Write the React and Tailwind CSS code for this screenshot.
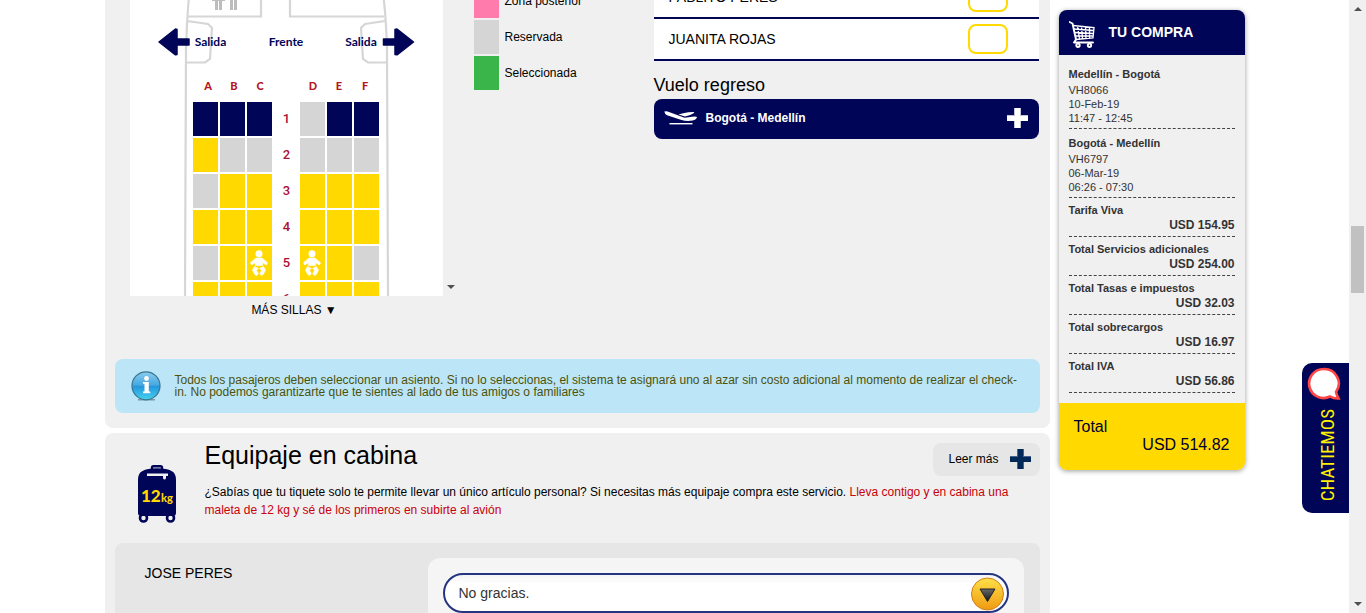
import React from "react";

const SEAT_COLORS = {
  n: "bg-[#000557]",
  y: "bg-[#ffd900]",
  g: "bg-[#d5d5d5]",
  b: "bg-[#ffd900]",
};

const SEAT_ROWS = [
  { row: 1, seats: "nnngnn" },
  { row: 2, seats: "yggggg" },
  { row: 3, seats: "gyyyyy" },
  { row: 4, seats: "yyyyyy" },
  { row: 5, seats: "gybbyg" },
  { row: 6, seats: "yyyyyy" },
];

const LEGEND = [
  { label: "Zona posterior", color: "bg-[#ff7bac]" },
  { label: "Reservada", color: "bg-[#d5d5d5]" },
  { label: "Seleccionada", color: "bg-[#39b54a]" },
];

const FLIGHTS = [
  { route: "Medellín - Bogotá", code: "VH8066", date: "10-Feb-19", time: "11:47 - 12:45" },
  { route: "Bogotá - Medellín", code: "VH6797", date: "06-Mar-19", time: "06:26 - 07:30" },
];

const FEES = [
  { label: "Tarifa Viva", amount: "USD 154.95" },
  { label: "Total Servicios adicionales", amount: "USD 254.00" },
  { label: "Total Tasas e impuestos", amount: "USD 32.03" },
  { label: "Total sobrecargos", amount: "USD 16.97" },
  { label: "Total IVA", amount: "USD 56.86" },
];

function BabyIcon() {
  return (
    <svg viewBox="0 0 18 26" className="h-[26px] w-[18px]" aria-hidden="true">
      <circle cx="9" cy="3.7" r="3.500" fill="#fff" />
      <path d="M6 8 H12 L17.600 12.800 L16.400 15 L12.600 12.800 V15.500 H5.400 V12.800 L1.600 15 L0.400 12.800 Z" fill="#fff" stroke="#fff" strokeWidth="0.600" strokeLinejoin="round" />
      <path d="M4.600 16.500 L8.400 18.500 L6.400 20.300 L8.300 23.500 L6.800 25.500 L4.800 24.500 L2.400 20 Z" fill="#fff" stroke="#fff" strokeWidth="0.600" strokeLinejoin="round" />
      <path d="M13.400 16.500 L9.600 18.500 L11.600 20.300 L9.700 23.500 L11.200 25.500 L13.200 24.500 L15.600 20 Z" fill="#fff" stroke="#fff" strokeWidth="0.600" strokeLinejoin="round" />
    </svg>
  );
}

function PlaneOutline() {
  const letters = [["A", 208], ["B", 234], ["C", 260], ["D", 313], ["E", 339], ["F", 365]];
  return (
    <svg viewBox="130 -23 313 319" className="absolute inset-0 h-full w-full" aria-hidden="true">
      <g fill="none" stroke="#d6d6d6" strokeWidth="2.2">
        <path d="M191 -23 Q187 10 186 50 L185 296" />
        <path d="M381 -23 Q386 10 387 50 L388 296" />
        <path d="M188 16.5 H261 V-23 M384 16.5 H290 V-23" />
        <path d="M187 21 L208 24 L212 28 L210 59 L205 62.5 H186" />
        <path d="M385 21 L365 24 L361 28 L363 59 L368 62.5 H387" />
      </g>
      <g fill="#bdbdbd">
        <path d="M212 -4 H225 V1 H222 V10 H219 V1 H218 V10 H215 V1 H212 Z" />
        <path d="M230 -4 H237 V10 H234 V0 H233 V10 H230 Z" />
      </g>
      <g fill="#000557" stroke="#000557" strokeWidth="1.5" strokeLinejoin="round">
        <path d="M159 42 L175.500 29 L177 29.500 V39 H189 V45 H177 V54.500 L175.500 54.800 Z" />
        <path d="M413.500 42 L397 29 L395 29.500 V39 H383.500 V45 H395 V54.500 L397 54.800 Z" />
      </g>
      <g className="font-['Lato',sans-serif] text-[12px] font-bold" fill="#000557" textAnchor="middle">
        <text x="210.500" y="46">Salida</text>
        <text x="286" y="46">Frente</text>
        <text x="361" y="46">Salida</text>
      </g>
      <g className="font-['Lato',sans-serif] text-[11px] font-black" fill="#b5161f" textAnchor="middle">
        {letters.map(([l, x]) => (
          <text key={l} x={x} y="90">{l}</text>
        ))}
      </g>
    </svg>
  );
}

function Seat({ kind, name }) {
  return (
    <button type="button" aria-label={name} className={"flex h-[34px] items-center justify-center " + SEAT_COLORS[kind]}>
      {kind === "b" && <BabyIcon />}
    </button>
  );
}

function SeatMap() {
  return (
    <div className="w-[313px] shrink-0">
      <div className="relative h-[319px] overflow-hidden bg-white pt-[125px]">
        <PlaneOutline />
        <div className="relative ml-[63px] grid w-fit grid-cols-[25px_25px_25px_24px_25px_25px_25px] gap-[2px]">
          {SEAT_ROWS.map(({ row, seats }) => (
            <React.Fragment key={row}>
              {[0, 1, 2].map((i) => (
                <Seat key={i} kind={seats[i]} name={row + "ABCDEF"[i]} />
              ))}
              <span className="pl-[2px] text-center text-[13px] font-medium leading-[34px] text-[#ab1036] font-['Roboto',sans-serif]">{row}</span>
              {[3, 4, 5].map((i) => (
                <Seat key={i} kind={seats[i]} name={row + "ABCDEF"[i]} />
              ))}
            </React.Fragment>
          ))}
        </div>
      </div>
      <button type="button" className="block w-full pl-4 text-center text-[12px] leading-7">MÁS SILLAS ▼</button>
    </div>
  );
}

function Plus({ color, shade }) {
  return (
    <svg viewBox="0 0 21 20" className="h-5 w-[21px] shrink-0" aria-hidden="true">
      <path d="M7 0 H14 V7 H21 V13 H14 V20 H7 V13 H0 V7 H7 Z" fill={shade} />
      <path d="M8 0 H13 V8 H21 V13 H13 V20 H8 V13 H0 V8 H8 Z" fill={color} />
    </svg>
  );
}

function TakeoffIcon() {
  return (
    <svg viewBox="0 0 34 14" className="h-[14px] w-[34px] shrink-0" aria-hidden="true">
      <g fill="#fff">
        <path d="M0.300 0.600 Q2.500 -0.200 5 0.900 L14.500 4.600 L20.500 6.700 Q25 6.500 28 5.800 Q31.500 4.900 33 6 Q32.500 8.500 28.500 9.600 Q23 10.800 17.500 9 L3 4.300 Q0.800 3.400 0.300 0.600 Z" />
        <path d="M14.500 3.600 Q19 1.400 29 0.900 Q31 0.900 30 2 Q27 4.200 21 5.600 Z" />
        <rect x="5.500" y="12" width="23" height="1.400" />
      </g>
    </svg>
  );
}

function Passengers() {
  return (
    <div className="ml-auto w-[385px]">
      {["PABLITO PERES", "JUANITA ROJAS"].map((name) => (
        <label key={name} className="flex h-[42px] items-center justify-between border-b-2 border-[#000557] bg-white pl-[15px] pr-[31px] text-[14px]">
          {name}
          <input type="text" readOnly className="h-[30px] w-10 rounded-lg border-2 border-[#ffd900] bg-white outline-none" />
        </label>
      ))}
      <h3 className="pb-[2px] pt-3 text-[18px] leading-6">Vuelo regreso</h3>
      <button type="button" className="flex h-10 w-full items-center rounded-lg bg-[#000557] pb-[2px] pl-[10px] pr-[11px] text-[12px] font-bold text-white">
        <TakeoffIcon />
        <span className="ml-2 flex-1 text-left">Bogotá - Medellín</span>
        <Plus color="#fff" shade="#c4c5d8" />
      </button>
    </div>
  );
}

function InfoIcon() {
  return (
    <svg viewBox="0 0 30 30" className="h-[30px] w-[30px] shrink-0" aria-hidden="true">
      <defs>
        <linearGradient id="infoFill" x1="0" y1="0" x2="0" y2="1">
          <stop offset="0" stopColor="#8ccdee" />
          <stop offset="0.480" stopColor="#45a7e0" />
          <stop offset="0.520" stopColor="#2496dc" />
          <stop offset="1" stopColor="#45d3ee" />
        </linearGradient>
      </defs>
      <rect x="7" y="28" width="17" height="1.500" fill="#7d99a6" />
      <circle cx="15" cy="14.800" r="14" fill="url(#infoFill)" stroke="#38758f" strokeWidth="1.200" />
      <circle cx="15.500" cy="7.500" r="2.400" fill="#fff" />
      <path d="M12 11 H17.800 V20.500 H19.300 V22.200 H12 V20.500 H13.500 V12.700 H12 Z" fill="#fff" />
    </svg>
  );
}

function SuitcaseIcon() {
  return (
    <svg viewBox="0 0 38 58" className="h-[58px] w-[38px] shrink-0" aria-label="12kg">
      <path d="M14 4.500 V2.500 Q14 1.200 15.500 1.200 H22.500 Q24 1.200 24 2.500 V4.500" fill="none" stroke="#000557" strokeWidth="2.400" />
      <circle cx="5.500" cy="53" r="3.500" fill="#f0f0f0" stroke="#000557" strokeWidth="2.600" />
      <circle cx="32.500" cy="53" r="3.500" fill="#f0f0f0" stroke="#000557" strokeWidth="2.600" />
      <path d="M0 15 Q0 8 4.500 6 Q9 3.200 19 3.200 Q29 3.200 33.500 6 Q38 8 38 15 V48 Q38 51 35 51 H3 Q0 51 0 48 Z" fill="#000557" />
      <path d="M9 8.500 H30 V11 H28 V13 Q27.800 14.500 26.300 14.500 Q25 14.300 25 12.500 V11 H9 Z" fill="#f0f0f0" />
      <text x="3" y="37" fill="#ffd900" className="font-['Lato',sans-serif] text-[17px] font-black">12</text>
      <text x="23" y="37" fill="#ffd900" className="font-['Lato',sans-serif] text-[11px] font-black">kg</text>
    </svg>
  );
}

function CartIcon() {
  return (
    <svg viewBox="0 0 26 27" className="h-[27px] w-[26px] shrink-0" fill="none" stroke="#fff" aria-hidden="true">
      <path d="M0.500 1 L3.500 2.500 L7 18.500 L5 21.500 H24" strokeWidth="1.900" strokeLinejoin="round" strokeLinecap="round" />
      <path d="M4 4.500 L25 6.500 L24 17 L7 18.500 M4.500 8 L24.500 9.500 M5.500 11.500 L24 12.500 M6 15 L24 15 M8.500 5 L10.500 18 M12.500 5.500 L13.500 18 M16.500 6 L17 17.500 M20.500 6.500 L20.500 17" strokeWidth="1.300" />
      <circle cx="9" cy="24.300" r="1.700" strokeWidth="1.900" />
      <circle cx="20.500" cy="24.300" r="1.700" strokeWidth="1.900" />
    </svg>
  );
}

function Cart() {
  return (
    <aside className="mt-[10px] w-[186px] shrink-0 self-start overflow-hidden rounded-lg bg-[#f0f0f0] text-[#333] shadow-[0_1px_5px_rgba(0,0,0,0.4)]">
      <h2 className="flex h-[45px] items-center bg-[#000557] pl-[10px] pt-1 text-[14px] font-bold text-white">
        <CartIcon />
        <span className="ml-[14px] pb-1">TU COMPRA</span>
      </h2>
      <div className="px-[10px] pb-[10px] pt-[5px]">
        {FLIGHTS.map((f) => (
          <div key={f.code} className="border-b border-dashed border-[#444] pb-[3px] pt-[6px] text-[11px] leading-[14px]">
            <h3 className="font-bold leading-[17px]">{f.route}</h3>
            <p>{f.code}</p>
            <p>{f.date}</p>
            <p>{f.time}</p>
          </div>
        ))}
        {FEES.map((f) => (
          <div key={f.label} className="border-b border-dashed border-[#444] pb-[3px] pt-[5px] font-bold">
            <p className="text-[11px] leading-[14px]">{f.label}</p>
            <p className="text-right text-[12px] leading-4">{f.amount}</p>
          </div>
        ))}
      </div>
      <div className="bg-[#ffd900] px-[15px] pb-4 pt-[15px] text-[16px] leading-[18px] text-[#000030]">
        <p>Total</p>
        <p className="text-right">USD 514.82</p>
      </div>
    </aside>
  );
}

function SeatsSection() {
  return (
    <section className="-mt-[23px] rounded-b-lg bg-[#f0f0f0] px-[10px] pb-[15px]">
      <div className="flex pb-[35px] pl-[15px] pr-px">
        <SeatMap />
        <div className="flex h-[319px] w-[17px] items-end justify-center pb-[7px]">
          <svg viewBox="0 0 8 4" className="h-1 w-2" aria-hidden="true">
            <path d="M0 0 H8 L4 4 Z" fill="#505050" />
          </svg>
        </div>
        <ul className="ml-[14px] flex flex-col gap-[2px] pt-[7px] text-[12px]">
          {LEGEND.map((l) => (
            <li key={l.label} className="flex h-[34px] items-center gap-[6px]">
              <span className={"h-full w-[25px] " + l.color} />
              {l.label}
            </li>
          ))}
        </ul>
        <Passengers />
      </div>
      <div className="flex h-[54px] items-center gap-[14px] rounded-lg bg-[#bce5f7] pl-4 pr-4 text-[12px] leading-3 text-[#4c5208]">
        <InfoIcon />
        <p>
          Todos los pasajeros deben seleccionar un asiento. Si no lo seleccionas, el sistema te asignará uno al azar sin costo adicional al momento de realizar el check-in. No podemos garantizarte que te sientes al lado de tus amigos o familiares
        </p>
      </div>
    </section>
  );
}

function BaggageSection() {
  return (
    <section className="mt-[5px] rounded-t-lg bg-[#f0f0f0] px-[10px] pt-[10px]">
      <div className="flex h-[100px]">
        <div className="w-[90px] pl-[23px] pt-[22px]">
          <SuitcaseIcon />
        </div>
        <div className="flex-1">
          <div className="flex items-start justify-between">
            <h2 className="text-[25px] leading-6">Equipaje en cabina</h2>
            <button type="button" className="flex h-[33px] items-center gap-[11px] rounded-lg bg-[#e6e6e6] pb-[2px] pl-[15px] pr-[9px] text-[12px]">
              Leer más
              <Plus color="#00295a" shade="#47648a" />
            </button>
          </div>
          <p className="mt-[7px] pr-5 text-[12px] leading-[18px]">
            ¿Sabías que tu tiquete solo te permite llevar un único artículo personal? Si necesitas más equipaje compra este servicio.{" "}
            <span className="text-[#c8000a]">Lleva contigo y en cabina una maleta de 12 kg y sé de los primeros en subirte al avión</span>
          </p>
        </div>
      </div>
      <div className="flex justify-between rounded-lg bg-[#e6e6e6] pb-10 pl-[30px] pr-4 pt-[15px] text-[14px]">
        <label htmlFor="cabin-bag" className="pt-[5px] leading-5">JOSE PERES</label>
        <div className="w-[596px] rounded-xl bg-[#f5f5f5] p-[15px]">
          <div className="relative">
            <select id="cabin-bag" className="h-10 w-full appearance-none rounded-[20px] border-2 border-[#253480] bg-white bg-linear-to-b from-[#f4f4f4] to-white to-25% pl-[14px] text-[14px] text-[#333]">
              <option>No gracias.</option>
            </select>
            <svg viewBox="0 0 34 34" className="pointer-events-none absolute right-1 top-1 h-[34px] w-[34px]" aria-hidden="true">
              <defs>
                <linearGradient id="knob" x1="0" y1="0" x2="0" y2="1">
                  <stop offset="0" stopColor="#fde047" />
                  <stop offset="1" stopColor="#f09a12" />
                </linearGradient>
                <linearGradient id="caret" x1="0" y1="0" x2="0" y2="1">
                  <stop offset="0" stopColor="#6a6a6a" />
                  <stop offset="1" stopColor="#111" />
                </linearGradient>
              </defs>
              <circle cx="16.500" cy="17" r="16" fill="url(#knob)" stroke="#d08018" />
              <path d="M9 12 H24 L16.500 24.500 Z" fill="url(#caret)" stroke="#222" />
            </svg>
          </div>
        </div>
      </div>
    </section>
  );
}

function ChatTab() {
  return (
    <button type="button" className="absolute right-[17px] top-[363px] flex h-[150px] w-[47px] flex-col items-center rounded-l-[10px] bg-[#000557] pr-1 pt-1 text-[#fff200]">
      <svg viewBox="0 0 34 34" className="h-[34px] w-[34px]" aria-hidden="true">
        <path d="M16.500 2 A14.500 14.500 0 1 0 23 29.500 Q26.500 31.700 31.500 31.500 Q29.800 28.500 29 25 A14.500 14.500 0 0 0 16.500 2 Z" fill="#fff" stroke="#ff4545" strokeWidth="2.600" />
      </svg>
      <span className="ml-2 mt-2 rotate-180 font-['Roboto_Condensed','Liberation_Sans_Narrow','Liberation_Sans',sans-serif] text-[19px] leading-7 [writing-mode:vertical-rl]">CHATIEMOS</span>
    </button>
  );
}

function Scrollbar() {
  return (
    <div className="flex w-[17px] shrink-0 flex-col items-center bg-[#f0f0f0] py-[7px]" aria-hidden="true">
      <svg viewBox="0 0 8 4" className="h-1 w-2"><path d="M0 4 H8 L4 0 Z" fill="#505050" /></svg>
      <div className="mt-[215px] h-[67px] w-[13px] bg-[#c1c1c1]" />
      <svg viewBox="0 0 8 4" className="mt-auto h-1 w-2"><path d="M0 0 H8 L4 4 Z" fill="#505050" /></svg>
    </div>
  );
}

export default function App() {
  return (
    <div className="relative flex h-screen overflow-hidden bg-white font-['Liberation_Sans',Arial,sans-serif] text-black">
      <div className="flex flex-1 justify-center gap-[9px]">
        <main className="w-[945px]">
          <SeatsSection />
          <BaggageSection />
        </main>
        <Cart />
      </div>
      <ChatTab />
      <Scrollbar />
    </div>
  );
}
